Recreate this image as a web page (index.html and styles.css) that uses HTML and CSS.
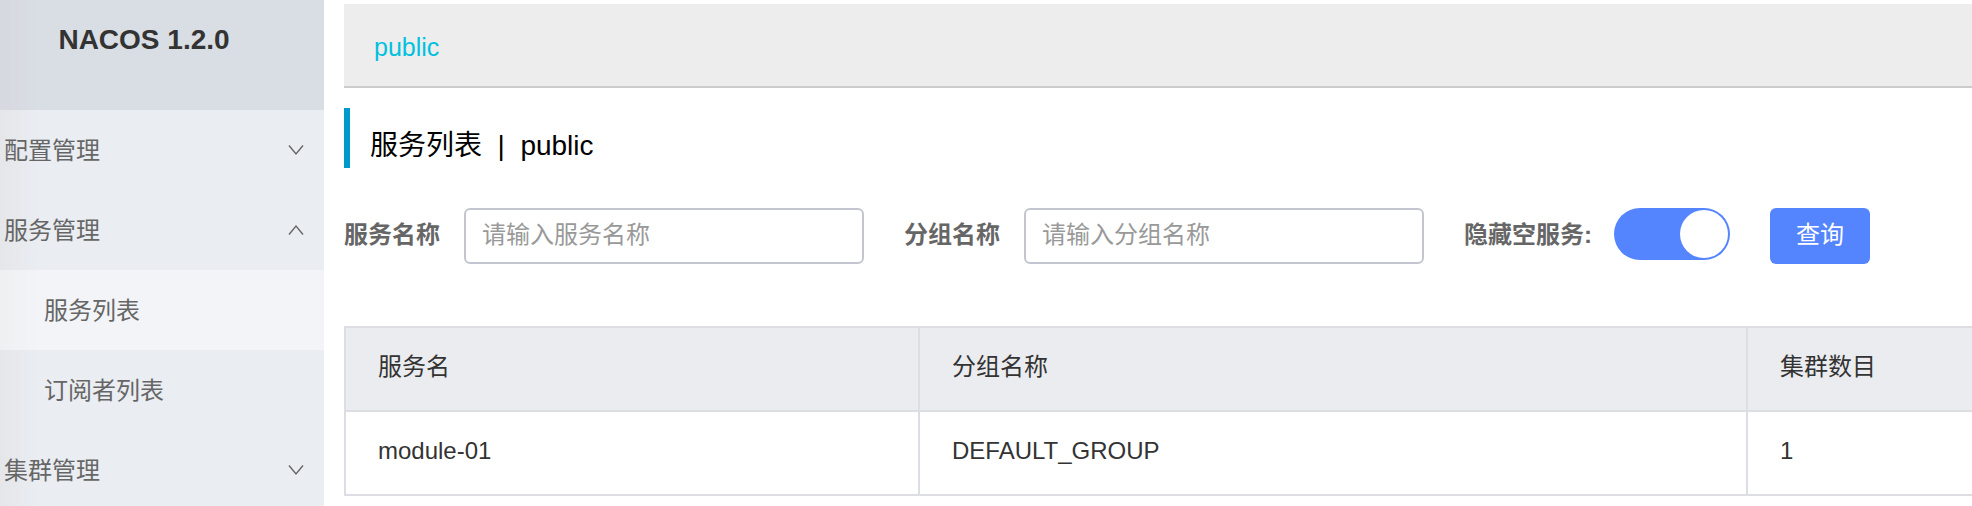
FILE: index.html
```html
<!DOCTYPE html>
<html lang="zh-CN">
<head>
<meta charset="utf-8">
<title>NACOS - 服务列表</title>
<link rel="stylesheet" href="styles.css">
</head>
<body>
<div class="layout">
  <aside class="sidebar">
    <div class="brand">NACOS 1.2.0</div>
    <nav class="menu">
      <button class="menu-group" type="button">配置管理
        <svg class="chevron" viewBox="0 0 16 12" aria-hidden="true"><path d="M1 1.5 8 10 15 1.5"/></svg>
      </button>
      <button class="menu-group" type="button" aria-expanded="true">服务管理
        <svg class="chevron" viewBox="0 0 16 12" aria-hidden="true"><path d="M1 10.5 8 2 15 10.5"/></svg>
      </button>
      <a class="menu-item active" href="#services">服务列表</a>
      <a class="menu-item" href="#subscribers">订阅者列表</a>
      <button class="menu-group" type="button">集群管理
        <svg class="chevron" viewBox="0 0 16 12" aria-hidden="true"><path d="M1 1.5 8 10 15 1.5"/></svg>
      </button>
    </nav>
  </aside>
  <main class="main">
    <div class="namespaces"><a class="namespace" href="#public">public</a></div>
    <h1 class="title">服务列表&nbsp; | &nbsp;public</h1>
    <form class="filters">
      <div class="field">
        <label for="service">服务名称</label>
        <input class="text-input" id="service" type="text" placeholder="请输入服务名称">
      </div>
      <div class="field">
        <label for="group">分组名称</label>
        <input class="text-input" id="group" type="text" placeholder="请输入分组名称">
      </div>
      <div class="field field-switch">
        <label for="hide-empty">隐藏空服务:</label>
        <input class="switch" id="hide-empty" type="checkbox" role="switch" checked>
      </div>
      <button class="search" type="button">查询</button>
    </form>
    <table class="services">
      <colgroup><col class="col-name"><col class="col-group"><col></colgroup>
      <thead>
        <tr><th>服务名</th><th>分组名称</th><th>集群数目</th></tr>
      </thead>
      <tbody>
        <tr><td>module-01</td><td>DEFAULT_GROUP</td><td>1</td></tr>
      </tbody>
    </table>
  </main>
</div>
</body>
</html>
```
FILE: styles.css
```css
* {
  box-sizing: border-box;
}

body {
  margin: 0;
  background: #fff;
  color: #333;
  font: 24px/36px "Liberation Sans", "Noto Sans CJK SC", sans-serif;
}

button,
input {
  font: inherit;
}

a {
  color: inherit;
  text-decoration: none;
}

.layout {
  display: flex;
  height: 100vh;
  overflow: hidden;
}

.sidebar {
  flex: 0 0 324px;
  background: linear-gradient(to right, rgba(220, 220, 220, 0.4), rgba(220, 220, 220, 0) 40px), #eaedf2;
}

.brand {
  height: 110px;
  padding: 20px 36px 0 0;
  background: linear-gradient(to right, rgba(200, 200, 205, 0.2), rgba(200, 200, 205, 0) 40px), #d9dde4;
  font-size: 28px;
  line-height: 40px;
  font-weight: bold;
  text-align: center;
}

.menu {
  display: flex;
  flex-direction: column;
}

.menu-group,
.menu-item {
  display: flex;
  align-items: center;
  justify-content: space-between;
  height: 80px;
  padding: 2px 20px 0 4px;
  border: 0;
  background: none;
  color: #666;
}

.menu-item {
  padding-left: 44px;
}

.menu-item.active {
  background: rgba(255, 255, 255, 0.4);
}

.chevron {
  width: 16px;
  height: 12px;
  margin-bottom: 2px;
  fill: none;
  stroke: #666;
  stroke-width: 1.4;
}

.main {
  flex: 1;
  min-width: 0;
  padding: 4px 0 0 20px;
}

.namespaces {
  display: flex;
  align-items: center;
  height: 84px;
  padding: 4px 30px 0;
  border-bottom: 2px solid #ccc;
  background: #ededed;
}

.namespace {
  color: #00c1de;
  font-size: 25px;
}

.title {
  height: 60px;
  margin: 20px 0 40px;
  padding: 18px 0 0 20px;
  border-left: 6px solid #09c;
  color: #000;
  font-size: 28px;
  line-height: 40px;
  font-weight: normal;
}

.filters {
  display: flex;
  align-items: flex-start;
  gap: 40px;
  margin-bottom: 62px;
}

.field {
  display: flex;
  align-items: flex-start;
  gap: 24px;
}

.field-switch {
  gap: 22px;
}

.field label {
  color: #666;
  font-weight: bold;
  line-height: 54px;
  white-space: nowrap;
}

.text-input {
  width: 400px;
  height: 56px;
  padding: 0 16px 2px;
  border: 2px solid #c4c6cf;
  border-radius: 6px;
  background: #fff;
  color: #333;
}

.text-input::placeholder {
  color: #999;
  opacity: 1;
}

.switch {
  display: flex;
  justify-content: flex-end;
  width: 116px;
  height: 52px;
  margin: 0;
  padding: 2px;
  border-radius: 26px;
  background: #5584ff;
  appearance: none;
}

.switch::before {
  content: "";
  width: 48px;
  height: 48px;
  border-radius: 50%;
  background: #fff;
}

.search {
  width: 100px;
  height: 56px;
  padding: 0 0 2px;
  border: 0;
  border-radius: 6px;
  background: #5584ff;
  color: #fff;
}

.services {
  width: 100%;
  border-collapse: separate;
  border-spacing: 0;
  border-top: 2px solid #dcdee3;
  table-layout: fixed;
}

.col-name {
  width: 574px;
}

.col-group {
  width: 828px;
}

.services th,
.services td {
  height: 84px;
  padding: 0 32px 4px;
  border-bottom: 2px solid #dcdee3;
  border-left: 2px solid #dcdee3;
  font-weight: normal;
  text-align: left;
}

.services th {
  background: #ebecf0;
}
```
